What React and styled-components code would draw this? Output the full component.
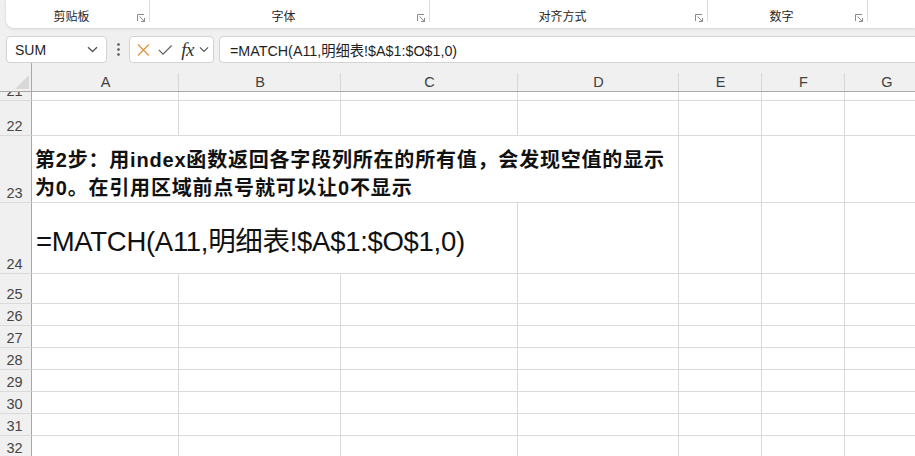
import React from "react";
import styled, { createGlobalStyle } from "styled-components";

const GlobalStyle = createGlobalStyle`
  html, body {
    margin: 0;
    padding: 0;
  }
  body {
    background: #f0f0f0;
    overflow: hidden;
    font-family: "Liberation Sans", "Noto Sans CJK SC", sans-serif;
  }
`;

const COLS = "32px 147px 162px 177px 161px 83px 83px 84px";
const LETTERS = ["A", "B", "C", "D", "E", "F", "G"];
const GRID = "#dadada";
const EDGE = "#a8a8a8";

const Page = styled.div`
  width: 915px;
  height: 456px;
  overflow: hidden;
  display: flex;
  flex-direction: column;
`;

const Ribbon = styled.div`
  margin-left: 6px;
  height: 28px;
  flex-shrink: 0;
  display: flex;
  background: #fff;
  border-bottom-left-radius: 8px;
  box-shadow: 0 1px 3px rgba(0, 0, 0, 0.13);
`;

const Group = styled.div`
  position: relative;
  width: ${props => props.$w}px;
  flex-shrink: 0;
  box-sizing: border-box;
  display: flex;
  justify-content: center;
  padding: 7px 13px 0 0;
  font-family: "Noto Sans CJK SC", sans-serif;
  font-size: 12px;
  line-height: 17px;
  color: #262626;
  &::after {
    content: "";
    position: absolute;
    right: 0;
    top: 0;
    width: 1px;
    height: 22px;
    background: ${props => (props.$last ? "transparent" : "#dedede")};
  }
`;

const Launcher = styled.svg`
  position: absolute;
  right: 4px;
  top: 14px;
`;

const FormulaBar = styled.div`
  margin-top: 8px;
  height: 27px;
  flex-shrink: 0;
  display: flex;
  padding-left: 6px;
`;

const Box = styled.div`
  box-sizing: border-box;
  background: #fff;
  border: 1px solid #d3d3d3;
  border-radius: 4px;
  display: flex;
  align-items: center;
`;

const NameBox = styled(Box)`
  width: 101px;
  padding: 0 8px 0 8px;
  justify-content: space-between;
  font-size: 14px;
  color: #1f1f1f;
`;

const Dots = styled.div`
  width: 22px;
  display: flex;
  align-items: center;
  justify-content: center;
`;

const FnBox = styled(Box)`
  width: 85px;
  padding: 0 4px 0 7px;
  gap: 8px;
`;

const Fx = styled.span`
  font-family: "Liberation Serif", serif;
  font-style: italic;
  font-size: 19px;
  line-height: 20px;
  color: #333;
  letter-spacing: -0.5px;
  margin: 0 -3px 0 1px;
`;

const Input = styled(Box)`
  flex: 1;
  margin-left: 5px;
  margin-right: -8px;
  padding-left: 10px;
  font-size: 14.3px;
  color: #1f1f1f;
`;

const Sheet = styled.div`
  flex: 1;
  display: flex;
  flex-direction: column;
`;

const HeaderRow = styled.div`
  display: grid;
  grid-template-columns: ${COLS};
  height: 29px;
  flex-shrink: 0;
  background: #f0f0f0;
  border-bottom: 1px solid ${EDGE};
  box-sizing: border-box;
`;

const Corner = styled.div`
  position: relative;
  border-right: 1px solid ${EDGE};
  &::after {
    content: "";
    position: absolute;
    right: 2px;
    bottom: 2px;
    border-style: solid;
    border-width: 0 0 14px 14px;
    border-color: transparent transparent #d8d8d8 transparent;
  }
`;

const ColHead = styled.div`
  position: relative;
  display: flex;
  align-items: flex-end;
  justify-content: center;
  font-size: 14.5px;
  line-height: 17px;
  color: #404040;
  &::after {
    content: "";
    position: absolute;
    right: 0;
    top: 10px;
    bottom: 0;
    width: 1px;
    background: #d6d6d6;
  }
`;

const Row = styled.div`
  display: grid;
  grid-template-columns: ${COLS};
  height: ${props => props.$h}px;
  flex-shrink: 0;
`;

const RowHead = styled.div`
  box-sizing: border-box;
  overflow: hidden;
  background: #f0f0f0;
  border-right: 1px solid ${EDGE};
  border-bottom: 1px solid ${GRID};
  display: flex;
  align-items: flex-end;
  justify-content: center;
  font-size: 14.5px;
  line-height: 17px;
  color: #454545;
  padding-right: 2px;
`;

const Cell = styled.div`
  box-sizing: border-box;
  background: #fff;
  border-right: 1px solid ${GRID};
  border-bottom: 1px solid ${GRID};
  grid-column: span ${props => props.$span || 1};
  display: flex;
  align-items: flex-end;
  min-width: 0;
`;

const NoteText = styled.div`
  font-family: "Liberation Sans", "Noto Sans CJK SC", sans-serif;
  font-weight: bold;
  font-size: 20px;
  letter-spacing: 0.8px;
  line-height: 28px;
  color: #111;
  white-space: nowrap;
  padding: 0 0 0 3px;
`;

const BigText = styled.div`
  font-family: "Liberation Sans", "Noto Sans CJK SC", sans-serif;
  font-size: 27.5px;
  letter-spacing: -0.3px;
  line-height: 42px;
  color: #111;
  white-space: nowrap;
  padding: 0 0 10px 4px;
`;

const Chevron = () => (
  <svg width="11" height="7" viewBox="0 0 11 7">
    <path d="M1 1.2l4.5 4.3 4.5-4.3" fill="none" stroke="#555" strokeWidth="1.3" />
  </svg>
);

const LaunchIcon = () => (
  <Launcher width="9" height="9" viewBox="0 0 9 9">
    <path d="M0.5 7V0.5H7" fill="none" stroke="#8a8a8a" strokeWidth="1" />
    <path d="M2.5 2.5L7.5 7.5M7.5 4v3.5H4" fill="none" stroke="#8a8a8a" strokeWidth="1" />
  </Launcher>
);

const groups = [
  { label: "剪贴板", w: 144 },
  { label: "字体", w: 280 },
  { label: "对齐方式", w: 278 },
  { label: "数字", w: 160 },
  { label: "", w: 60, last: true }
];

const formula = "=MATCH(A11,明细表!$A$1:$O$1,0)";

const rows = [
  { n: 21, h: 9 },
  { n: 22, h: 35 },
  {
    n: 23,
    h: 67,
    span: 4,
    content: (
      <NoteText>
        第2步：用index函数返回各字段列所在的所有值，会发现空值的显示
        <br />
        为0。在引用区域前点号就可以让0不显示
      </NoteText>
    )
  },
  { n: 24, h: 71, span: 3, content: <BigText>{formula}</BigText> },
  { n: 25, h: 30 },
  { n: 26, h: 22 },
  { n: 27, h: 22 },
  { n: 28, h: 22 },
  { n: 29, h: 22 },
  { n: 30, h: 22 },
  { n: 31, h: 22 },
  { n: 32, h: 22 }
];

const SheetRow = ({ row }) => {
  const span = row.span || 0;
  const rest = LETTERS.length - span;
  return (
    <Row $h={row.h}>
      <RowHead>{row.n}</RowHead>
      {span > 0 && <Cell $span={span}>{row.content}</Cell>}
      {Array.from({ length: rest }).map((_, i) => (
        <Cell key={i} />
      ))}
    </Row>
  );
};

export default function App() {
  return (
    <Page>
      <GlobalStyle />
      <Ribbon>
        {groups.map(g => (
          <Group key={g.w + g.label} $w={g.w} $last={g.last}>
            {g.label}
            {!g.last && <LaunchIcon />}
          </Group>
        ))}
      </Ribbon>

      <FormulaBar>
        <NameBox>
          <span>SUM</span>
          <Chevron />
        </NameBox>
        <Dots>
          <svg width="3" height="13" viewBox="0 0 3 13">
            <circle cx="1.5" cy="1.5" r="1.3" fill="#555" />
            <circle cx="1.5" cy="6.5" r="1.3" fill="#555" />
            <circle cx="1.5" cy="11.5" r="1.3" fill="#555" />
          </svg>
        </Dots>
        <FnBox>
          <svg width="14" height="14" viewBox="0 0 14 14">
            <path d="M1 1l12 12M13 1L1 13" stroke="#e2913c" strokeWidth="1.3" />
          </svg>
          <svg width="16" height="13" viewBox="0 0 16 13">
            <path d="M1 7l4.5 4.5L15 2" fill="none" stroke="#5e5e5e" strokeWidth="1.3" />
          </svg>
          <Fx>fx</Fx>
          <Chevron />
        </FnBox>
        <Input>{formula}</Input>
      </FormulaBar>

      <Sheet>
        <HeaderRow>
          <Corner />
          {LETTERS.map(l => (
            <ColHead key={l}>{l}</ColHead>
          ))}
        </HeaderRow>
        {rows.map(r => (
          <SheetRow key={r.n} row={r} />
        ))}
      </Sheet>
    </Page>
  );
}
